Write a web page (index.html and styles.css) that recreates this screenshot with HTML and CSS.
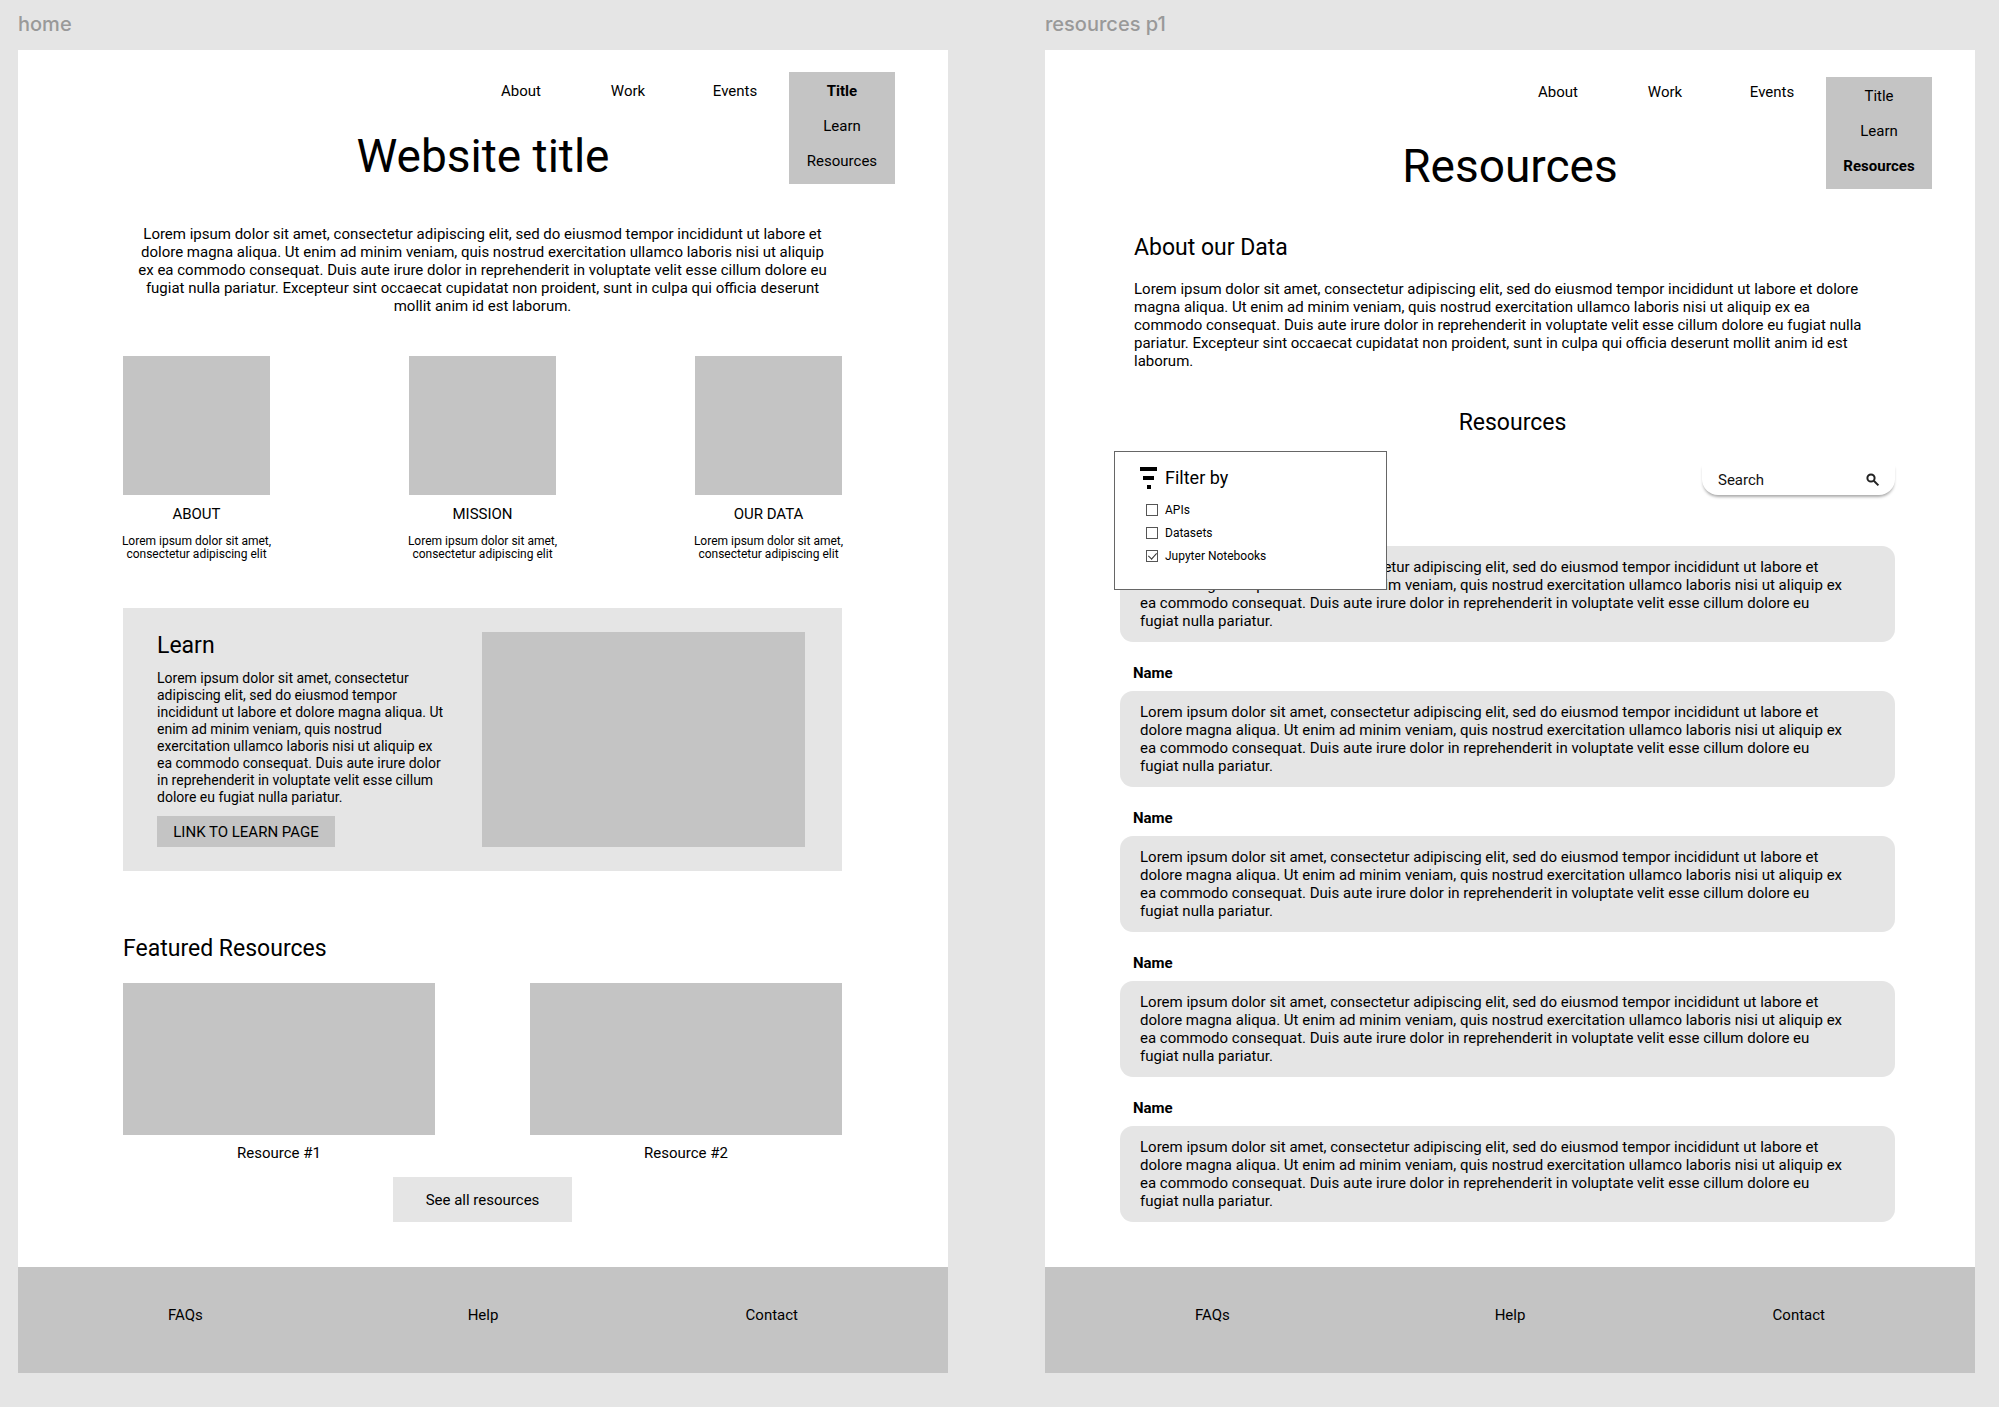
FILE: index.html
```html
<!DOCTYPE html>
<html lang="en">
<head>
    <meta charset="UTF-8">
    <meta name="viewport" content="width=device-width, initial-scale=1.0">
    <title>Website wireframes</title>
    <link rel="stylesheet" href="styles.css">
</head>
<body>

<div class="board">

    <!-- Home -->
    <section class="artboard">
        <div class="artboard-label">home</div>
        <div class="frame home">
            <header class="header">
                <nav>
                    <ul class="nav">
                        <li><a href="#">About</a></li>
                        <li><a href="#">Work</a></li>
                        <li><a href="#">Events</a></li>
                        <li class="dropdown">
                            <ul class="menu">
                                <li><a class="active" href="#">Title</a></li>
                                <li><a href="#">Learn</a></li>
                                <li><a href="#">Resources</a></li>
                            </ul>
                        </li>
                    </ul>
                </nav>
                <h1>Website title</h1>
            </header>

            <main class="content">
                <p class="intro">Lorem ipsum dolor sit amet, consectetur adipiscing elit, sed do eiusmod tempor incididunt ut labore et dolore magna aliqua. Ut enim ad minim veniam, quis nostrud exercitation ullamco laboris nisi ut aliquip ex ea commodo consequat. Duis aute irure dolor in reprehenderit in voluptate velit esse cillum dolore eu fugiat nulla pariatur. Excepteur sint occaecat cupidatat non proident, sunt in culpa qui officia deserunt mollit anim id est laborum.</p>

                <div class="cards">
                    <div class="card">
                        <div class="card-image"></div>
                        <h3>ABOUT</h3>
                        <p>Lorem ipsum dolor sit amet, consectetur adipiscing elit</p>
                    </div>
                    <div class="card">
                        <div class="card-image"></div>
                        <h3>MISSION</h3>
                        <p>Lorem ipsum dolor sit amet, consectetur adipiscing elit</p>
                    </div>
                    <div class="card">
                        <div class="card-image"></div>
                        <h3>OUR DATA</h3>
                        <p>Lorem ipsum dolor sit amet, consectetur adipiscing elit</p>
                    </div>
                </div>

                <div class="learn">
                    <div class="learn-text">
                        <h2>Learn</h2>
                        <p>Lorem ipsum dolor sit amet, consectetur adipiscing elit, sed do eiusmod tempor incididunt ut labore et dolore magna aliqua. Ut enim ad minim veniam, quis nostrud exercitation ullamco laboris nisi ut aliquip ex ea commodo consequat. Duis aute irure dolor in reprehenderit in voluptate velit esse cillum dolore eu fugiat nulla pariatur.</p>
                        <a class="learn-link" href="#">LINK TO LEARN PAGE</a>
                    </div>
                    <div class="learn-image"></div>
                </div>

                <h2>Featured Resources</h2>
                <div class="featured">
                    <div class="featured-item">
                        <div class="featured-image"></div>
                        <p>Resource #1</p>
                    </div>
                    <div class="featured-item">
                        <div class="featured-image"></div>
                        <p>Resource #2</p>
                    </div>
                </div>
                <button class="see-all" type="button">See all resources</button>
            </main>

            <footer class="footer">
                <a href="#">FAQs</a>
                <a href="#">Help</a>
                <a href="#">Contact</a>
            </footer>
        </div>
    </section>

    <!-- Resources -->
    <section class="artboard">
        <div class="artboard-label">resources p1</div>
        <div class="frame resources">
            <header class="header">
                <nav>
                    <ul class="nav">
                        <li><a href="#">About</a></li>
                        <li><a href="#">Work</a></li>
                        <li><a href="#">Events</a></li>
                        <li class="dropdown">
                            <ul class="menu">
                                <li><a href="#">Title</a></li>
                                <li><a href="#">Learn</a></li>
                                <li><a class="active" href="#">Resources</a></li>
                            </ul>
                        </li>
                    </ul>
                </nav>
                <h1>Resources</h1>
            </header>

            <main class="content">
                <div class="about-data">
                    <h2>About our Data</h2>
                    <p>Lorem ipsum dolor sit amet, consectetur adipiscing elit, sed do eiusmod tempor incididunt ut labore et dolore magna aliqua. Ut enim ad minim veniam, quis nostrud exercitation ullamco laboris nisi ut aliquip ex ea commodo consequat. Duis aute irure dolor in reprehenderit in voluptate velit esse cillum dolore eu fugiat nulla pariatur. Excepteur sint occaecat cupidatat non proident, sunt in culpa qui officia deserunt mollit anim id est laborum.</p>
                </div>

                <h2 class="list-title">Resources</h2>

                <div class="toolbar">
                    <form class="filter">
                        <div class="filter-title">
                            <svg width="18" height="22" viewBox="0 0 18 22" aria-hidden="true">
                                <rect x="0" y="0" width="17" height="4"/>
                                <rect x="3" y="9" width="11" height="4"/>
                                <rect x="7" y="18" width="4" height="4"/>
                            </svg>
                            <span>Filter by</span>
                        </div>
                        <label><input type="checkbox"> APIs</label>
                        <label><input type="checkbox"> Datasets</label>
                        <label><input type="checkbox" checked> Jupyter Notebooks</label>
                    </form>
                    <form class="search">
                        <input type="text" placeholder="Search" aria-label="Search">
                        <svg width="14" height="14" viewBox="0 0 14 14" aria-hidden="true">
                            <circle cx="5" cy="5" r="3.6"/>
                            <path d="M7.8 7.8L12.4 12.4"/>
                        </svg>
                    </form>
                </div>

                <div class="results">
                    <article class="result">
                        <h3>Name</h3>
                        <p>Lorem ipsum dolor sit amet, consectetur adipiscing elit, sed do eiusmod tempor incididunt ut labore et dolore magna aliqua. Ut enim ad minim veniam, quis nostrud exercitation ullamco laboris nisi ut aliquip ex ea commodo consequat. Duis aute irure dolor in reprehenderit in voluptate velit esse cillum dolore eu fugiat nulla pariatur.</p>
                    </article>
                    <article class="result">
                        <h3>Name</h3>
                        <p>Lorem ipsum dolor sit amet, consectetur adipiscing elit, sed do eiusmod tempor incididunt ut labore et dolore magna aliqua. Ut enim ad minim veniam, quis nostrud exercitation ullamco laboris nisi ut aliquip ex ea commodo consequat. Duis aute irure dolor in reprehenderit in voluptate velit esse cillum dolore eu fugiat nulla pariatur.</p>
                    </article>
                    <article class="result">
                        <h3>Name</h3>
                        <p>Lorem ipsum dolor sit amet, consectetur adipiscing elit, sed do eiusmod tempor incididunt ut labore et dolore magna aliqua. Ut enim ad minim veniam, quis nostrud exercitation ullamco laboris nisi ut aliquip ex ea commodo consequat. Duis aute irure dolor in reprehenderit in voluptate velit esse cillum dolore eu fugiat nulla pariatur.</p>
                    </article>
                    <article class="result">
                        <h3>Name</h3>
                        <p>Lorem ipsum dolor sit amet, consectetur adipiscing elit, sed do eiusmod tempor incididunt ut labore et dolore magna aliqua. Ut enim ad minim veniam, quis nostrud exercitation ullamco laboris nisi ut aliquip ex ea commodo consequat. Duis aute irure dolor in reprehenderit in voluptate velit esse cillum dolore eu fugiat nulla pariatur.</p>
                    </article>
                    <article class="result">
                        <h3>Name</h3>
                        <p>Lorem ipsum dolor sit amet, consectetur adipiscing elit, sed do eiusmod tempor incididunt ut labore et dolore magna aliqua. Ut enim ad minim veniam, quis nostrud exercitation ullamco laboris nisi ut aliquip ex ea commodo consequat. Duis aute irure dolor in reprehenderit in voluptate velit esse cillum dolore eu fugiat nulla pariatur.</p>
                    </article>
                </div>
            </main>

            <footer class="footer">
                <a href="#">FAQs</a>
                <a href="#">Help</a>
                <a href="#">Contact</a>
            </footer>
        </div>
    </section>

</div>

</body>
</html>
```

FILE: styles.css
```css
* {
    box-sizing: border-box;
}

body {
    margin: 0;
    background-color: #e5e5e5;
    color: #000;
    font-family: Roboto, sans-serif;
    font-size: 15px;
    line-height: 18px;
}

h1, h2, h3, p, ul {
    margin: 0;
    padding: 0;
    font-weight: 400;
}

ul {
    list-style: none;
}

a {
    color: inherit;
    text-decoration: none;
}

h1 {
    font-size: 46px;
    line-height: 54px;
    text-align: center;
}

h2 {
    font-size: 23px;
    line-height: 28px;
}

h3 {
    font-size: 15px;
}

.board {
    display: grid;
    grid-template-columns: 1fr 1fr;
    gap: 97px;
    padding: 0 24px 34px 18px;
}

.artboard {
    display: flex;
    flex-direction: column;
}

.artboard-label {
    padding: 12px 0 14px;
    color: #999;
    font-family: Inter, sans-serif;
    font-size: 20px;
    font-weight: 500;
    line-height: 24px;
}

.frame {
    display: flex;
    flex-direction: column;
    flex: 1;
    background-color: #fff;
}

/* Header */
.nav {
    display: flex;
    justify-content: flex-end;
    gap: 1px;
    text-align: center;
}

.nav > li {
    width: 106px;
}

.nav a {
    display: block;
}

.nav > li > a {
    padding: 10px 0 8px;
}

.dropdown {
    position: relative;
}

.menu {
    position: absolute;
    top: 0;
    left: 0;
    display: flex;
    flex-direction: column;
    gap: 17px;
    width: 100%;
    padding: 10px 0 14px;
    background-color: #c4c4c4;
}

.active {
    font-weight: 700;
}

.home .header {
    padding-top: 22px;
}

.home .nav {
    padding-right: 53px;
}

.home h1 {
    margin: 21px 0 42px;
}

.resources .header {
    padding-top: 23px;
}

.resources .nav {
    padding-right: 43px;
}

.resources .menu {
    top: 4px;
}

.resources h1 {
    margin: 30px 0 41px;
}

/* Home */
.content {
    flex: 1;
}

.home .content {
    padding: 0 106px 45px 105px;
}

.intro {
    padding: 0 12px;
    text-align: center;
}

.cards {
    display: flex;
    justify-content: space-between;
    margin-top: 41px;
    text-align: center;
}

.card {
    width: 147px;
}

.card-image {
    height: 139px;
    background-color: #c4c4c4;
}

.card h3 {
    margin: 10px 0 12px;
}

.card p {
    margin: 0 -4px;
    font-size: 12px;
    line-height: 13px;
}

.learn {
    display: flex;
    gap: 35px;
    margin: 47px 0 64px;
    padding: 24px 37px 24px 34px;
    background-color: #e5e5e5;
}

.learn-text {
    width: 290px;
}

.learn-text p {
    margin: 10px 0;
    font-size: 14px;
    line-height: 17px;
}

.learn-link {
    display: block;
    width: 178px;
    padding: 7px 0 6px;
    background-color: #c4c4c4;
    text-align: center;
}

.learn-image {
    flex: 1;
    background-color: #c4c4c4;
}

.featured {
    display: grid;
    grid-template-columns: 1fr 1fr;
    gap: 95px;
    margin-top: 20px;
    text-align: center;
}

.featured-image {
    height: 152px;
    margin-bottom: 9px;
    background-color: #c4c4c4;
}

.see-all {
    display: block;
    width: 179px;
    height: 45px;
    margin: 15px auto 0;
    border: none;
    background-color: #e5e5e5;
    color: #000;
    font: inherit;
    cursor: pointer;
}

/* Resources */
.resources .content {
    padding: 0 80px 45px 75px;
}

.about-data {
    padding: 0 18px 0 14px;
}

.about-data p {
    margin-top: 18px;
}

.list-title {
    margin: 39px 0 14px;
    padding-left: 10px;
    text-align: center;
}

.toolbar {
    position: relative;
    display: flex;
    justify-content: flex-end;
    align-items: flex-end;
    height: 44px;
}

.filter {
    position: absolute;
    top: 0;
    left: -6px;
    display: flex;
    flex-direction: column;
    gap: 9px;
    width: 273px;
    height: 139px;
    padding: 15px 25px;
    border: 1px solid #666;
    background-color: #fff;
    font-size: 12px;
    line-height: 14px;
}

.filter-title {
    display: flex;
    align-items: center;
    gap: 7px;
    margin-bottom: 5px;
    font-size: 18px;
    line-height: 22px;
}

.filter label {
    display: flex;
    align-items: center;
    gap: 7px;
    padding-left: 6px;
}

.filter input {
    position: relative;
    width: 12px;
    height: 12px;
    margin: 0;
    border: 1px solid #555;
    appearance: none;
}

/* tick mark */
.filter input:checked::after {
    content: "";
    position: absolute;
    top: 0;
    left: 3px;
    width: 4px;
    height: 7px;
    border: solid #333;
    border-width: 0 1px 1px 0;
    transform: rotate(42deg);
}

.search {
    display: flex;
    align-items: center;
    width: 193px;
    height: 31px;
    padding: 0 15px 0 16px;
    border-radius: 0 0 16px 16px;
    background-color: #fff;
    box-shadow: 0 3px 3px -1px #aaa;
}

.search input {
    flex: 1;
    min-width: 0;
    padding: 0;
    border: none;
    outline: none;
    background: none;
    font: inherit;
}

.search input::placeholder {
    color: #111;
}

.search svg {
    fill: none;
    stroke: #222;
    stroke-width: 2;
}

.results {
    display: flex;
    flex-direction: column;
    gap: 22px;
    margin-top: 24px;
}

.result h3 {
    margin: 0 0 9px 13px;
    font-weight: 700;
}

.result p {
    padding: 12px 46px 12px 20px;
    border-radius: 13px;
    background-color: #e5e5e5;
}

/* Footer */
.footer {
    display: grid;
    grid-template-columns: 1fr auto 1fr;
    height: 106px;
    padding: 39px 150px;
    background-color: #c4c4c4;
}

.footer a:last-child {
    text-align: right;
}
```
